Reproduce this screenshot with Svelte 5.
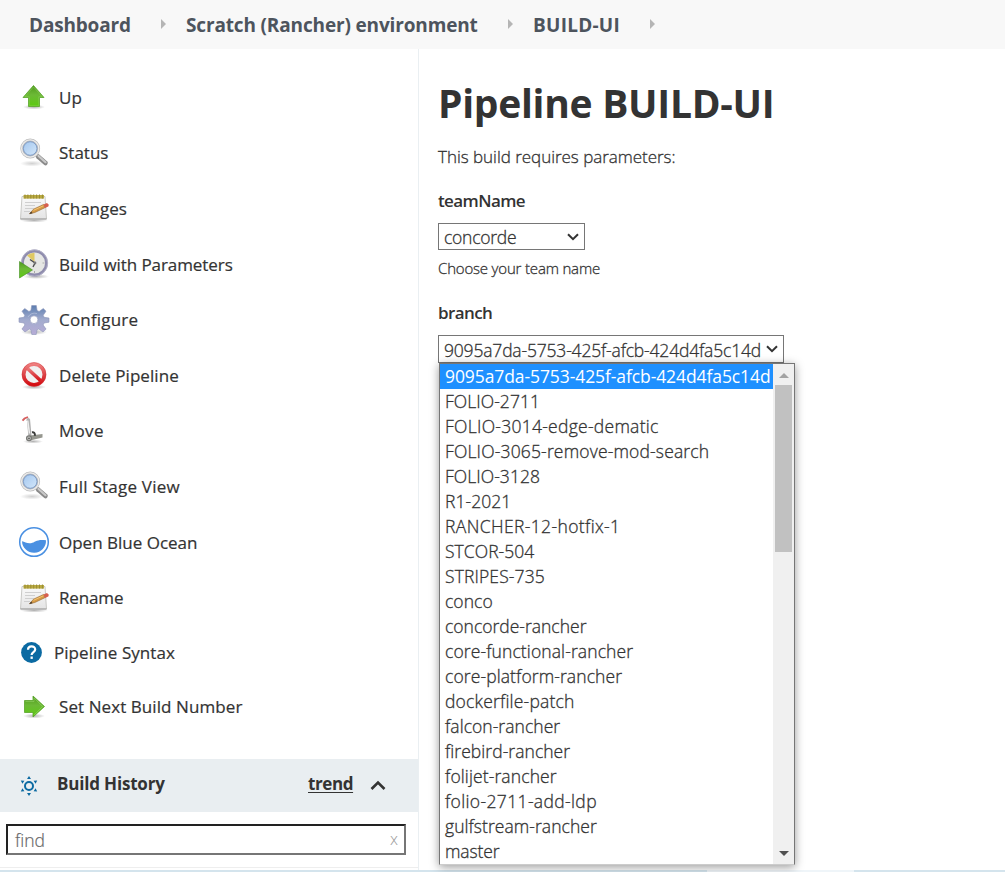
<script>
  const crumbs = [
    { text: 'Dashboard', width: 157, spacing: -0.18 },
    { text: 'Scratch (Rancher) environment', width: 347, spacing: -0.15 },
    { text: 'BUILD-UI', width: 142, spacing: 0.25 }
  ];

  const tasks = [
    { icon: 'up', text: 'Up' },
    { icon: 'search', text: 'Status' },
    { icon: 'notepad', text: 'Changes' },
    { icon: 'clock', text: 'Build with Parameters', spacing: -0.07 },
    { icon: 'gear', text: 'Configure', spacing: 0.18 },
    { icon: 'delete', text: 'Delete Pipeline', spacing: 0.07 },
    { icon: 'move', text: 'Move', spacing: 0.3 },
    { icon: 'search', text: 'Full Stage View', spacing: 0.24 },
    { icon: 'ocean', text: 'Open Blue Ocean' },
    { icon: 'notepad', text: 'Rename', spacing: -0.15 },
    { icon: 'help', text: 'Pipeline Syntax', spacing: 0.05 },
    { icon: 'next', text: 'Set Next Build Number', spacing: 0.08 }
  ];

  const branches = [
    { name: '9095a7da-5753-425f-afcb-424d4fa5c14d', spacing: -0.09 },
    { name: 'FOLIO-2711' },
    { name: 'FOLIO-3014-edge-dematic', spacing: 0.27 },
    { name: 'FOLIO-3065-remove-mod-search', spacing: 0.16 },
    { name: 'FOLIO-3128' },
    { name: 'R1-2021' },
    { name: 'RANCHER-12-hotfix-1', spacing: 0.38 },
    { name: 'STCOR-504' },
    { name: 'STRIPES-735', spacing: 0.12 },
    { name: 'conco' },
    { name: 'concorde-rancher', spacing: 0 },
    { name: 'core-functional-rancher', spacing: 0.11 },
    { name: 'core-platform-rancher', spacing: 0.1 },
    { name: 'dockerfile-patch', spacing: 0.19 },
    { name: 'falcon-rancher' },
    { name: 'firebird-rancher' },
    { name: 'folijet-rancher', spacing: 0.12 },
    { name: 'folio-2711-add-ldp', spacing: 0.36 },
    { name: 'gulfstream-rancher', spacing: 0.05 },
    { name: 'master', spacing: -0.1 }
  ];
  let selected = $state(branches[0].name);
</script>

<svg class="defs" width="0" height="0" aria-hidden="true">
  <defs>
    <linearGradient id="green" x1="0" y1="0" x2="0" y2="1">
      <stop offset="0" stop-color="#4f9a1c" /><stop offset=".45" stop-color="#6cb936" /><stop offset="1" stop-color="#5ccb10" />
    </linearGradient>
    <linearGradient id="lens" x1="0" y1="0" x2="1" y2="1">
      <stop offset="0" stop-color="#9fc4ee" /><stop offset="1" stop-color="#d8eafb" />
    </linearGradient>
    <linearGradient id="paper" x1="0" y1="0" x2="0" y2="1">
      <stop offset="0" stop-color="#fafafa" /><stop offset="1" stop-color="#e4e4e4" />
    </linearGradient>
    <linearGradient id="cog" x1="0" y1="0" x2="0" y2="1">
      <stop offset="0" stop-color="#5c7eb0" /><stop offset=".5" stop-color="#a3acce" /><stop offset="1" stop-color="#b6abd6" />
    </linearGradient>
    <linearGradient id="red" x1="0" y1="0" x2="0" y2="1">
      <stop offset="0" stop-color="#ef7f7f" /><stop offset=".5" stop-color="#dc4448" /><stop offset="1" stop-color="#d40d12" />
    </linearGradient>
    <radialGradient id="shade">
      <stop offset="0" stop-color="#000" stop-opacity=".3" /><stop offset="1" stop-color="#000" stop-opacity="0" />
    </radialGradient>
  </defs>
</svg>

{#snippet glyph(name)}
  <svg class="glyph" viewBox="0 0 32 32" width="32" height="32">
    {#if name === 'up'}
      <ellipse cx="16" cy="26" rx="11" ry="2.5" fill="url(#shade)" />
      <path d="M15.500 4.500 26 16.500h-4.500v9h-11v-9H5z" fill="url(#green)" stroke="#58a32a" stroke-width=".8" />
      <path d="M15.500 6 24 15.700h-3.300v9h-9.400v-9H7z" fill="none" stroke="#9bd66d" stroke-width=".6" opacity=".6" />
    {:else if name === 'next'}
      <ellipse cx="16" cy="26" rx="11" ry="2.500" fill="url(#shade)" />
      <path d="M6.500 10.500h8.500V6l11.500 10.500L15 27v-4.500H6.500z" fill="url(#green)" stroke="#58a32a" stroke-width=".8" />
      <path d="M7.500 11.500h8.500V8l8.500 8.500-8.500 8.500" fill="none" stroke="#a6dd7b" stroke-width=".7" opacity=".6" />
    {:else if name === 'search'}
      <ellipse cx="14" cy="26.500" rx="12" ry="3" fill="url(#shade)" opacity=".6" />
      <path d="M20 19.500 27.500 26" stroke="#8a8a8a" stroke-width="4.500" stroke-linecap="round" />
      <path d="M20.500 19 27.500 25.200" stroke="#c9c9c9" stroke-width="2.200" stroke-linecap="round" />
      <circle cx="12.200" cy="11.500" r="8.300" fill="url(#lens)" stroke="#bcbcbc" stroke-width="3.200" />
      <circle cx="12.200" cy="11.500" r="8.600" fill="none" stroke="#ececec" stroke-width="1.300" />
      <circle cx="12.200" cy="11.500" r="6.800" fill="none" stroke="#7e9ecb" stroke-width="1" />
    {:else if name === 'notepad'}
      <ellipse cx="16" cy="28.500" rx="14" ry="2" fill="url(#shade)" />
      <path d="M4 4.500h23l1.500 22.500H2.500z" fill="url(#paper)" stroke="#bdbdb9" stroke-width=".8" />
      <path d="M2.500 27h26" stroke="#a7a7a7" stroke-width="1.200" />
      <path d="M5.500 3h20.500v3.600H5.500z" fill="#bbab42" />
      <path d="M7 2.400v4.200M9.900 2.400v4.200M12.800 2.400v4.200M15.700 2.400v4.200M18.600 2.400v4.200M21.500 2.400v4.200M24.400 2.400v4.200" stroke="#8f8430" stroke-width=".8" />
      <path d="M7 10.500h16M7 13.500h10M7 16.500h9M6 19.500h6" stroke="#cfcfcf" />
      <path d="m11.500 21.800 4-4.600 10-4.700 1.800 3-10.500 5z" fill="#d49a45" stroke="#93642b" stroke-width=".6" />
      <path d="m15.500 18.300 10-4.600" stroke="#f4c473" />
      <path d="m25.500 12.500 3.500-1.500 1.800 1.800-.5 1.700-3.300 1.400z" fill="#d6604f" />
      <path d="m11.300 22 1.800-2.400 1.400 1.600z" fill="#463b2c" />
    {:else if name === 'clock'}
      <ellipse cx="18" cy="28.500" rx="13" ry="2.500" fill="url(#shade)" />
      <circle cx="16.500" cy="15" r="12" fill="#e6e7e4" stroke="#8f8cad" stroke-width="2.800" />
      <circle cx="16.500" cy="15" r="13.200" fill="none" stroke="#b9b7cb" stroke-width=".8" />
      <path d="M16.500 14 9 7.500Q12 5 16.500 4.800z" fill="#dfc862" />
      <path d="m12 11.500 5 3.500-2 4" fill="none" stroke="#4c4c4c" stroke-width="1.400" />
      <circle cx="17" cy="15" r="1.400" fill="#777" />
      <path d="M24.500 15h2M16.500 25v-2" stroke="#aaa" />
      <path d="M1.500 13.500 14.500 22 1.500 30z" fill="url(#green)" stroke="#418f20" stroke-width=".6" />
    {:else if name === 'gear'}
      <ellipse cx="16" cy="28" rx="13" ry="3" fill="url(#shade)" />
      <g fill="url(#cog)" stroke="#8d95b8" stroke-width=".6">
        <path fill-rule="evenodd" d="M13.700 1.500h4.600l.8 5 2 .9L25.300 4.500 28 7.200 25.200 11.300l.9 2 4.900.7v4.200l-5 .8-.9 2 3 4.100-3.100 2.900-4.200-3-1.800.8-.8 4.700h-4.400l-.8-4.700-1.800-.8-4.200 3-3.100-2.900 3-4.100-.9-2-5-.8V14l4.900-.7.9-2L4 7.200l2.700-2.700 4.200 2.900 2-.9zM16 11.800a3.900 3.900 0 1 0 0 7.800 3.900 3.900 0 0 0 0-7.800z" />
      </g>
      <path d="M10 13q3-5 9-3.500" fill="none" stroke="#bfc9e1" opacity=".6" />
    {:else if name === 'delete'}
      <ellipse cx="16" cy="28" rx="12" ry="2.500" fill="url(#shade)" />
      <circle cx="16" cy="15.500" r="10" fill="#f1f1f1" />
      <path d="m9 9 14 13" stroke="url(#red)" stroke-width="3.600" />
      <circle cx="16" cy="15.500" r="10.300" fill="none" stroke="url(#red)" stroke-width="3.600" />
      <circle cx="16" cy="15.500" r="12" fill="none" stroke="#cf3035" stroke-width=".5" />
    {:else if name === 'move'}
      <ellipse cx="15" cy="26.500" rx="10" ry="2" fill="url(#shade)" />
      <path d="m9 4 1.500 1 1.500 16.500" fill="none" stroke="#b0b0b0" stroke-width="3.200" />
      <path d="m9.700 5.500 1.800 13" fill="none" stroke="#ededed" stroke-width="1.500" />
      <path d="M4.500 5.700 6.500 3.500l3.500-1.500" fill="none" stroke="#d65f5f" stroke-width="1.900" />
      <path d="m12 20.500 12.500-1.500v3.500L12 25.500z" fill="#96978f" />
      <path d="M14 17.300q3-.5 3 3.500" fill="none" stroke="#3b3c3a" stroke-width="2" />
      <circle cx="11" cy="23.300" r="2.400" fill="#c9c9c5" stroke="#787976" stroke-width="1.300" />
      <circle cx="11" cy="23.300" r=".9" fill="#555" />
    {:else if name === 'ocean'}
      <circle cx="16" cy="16" r="14.300" fill="#fff" stroke="#4a90e2" stroke-width="1.500" />
      <path d="M4 15.200c3 .3 5 2.800 9 2 4.500-.9 5.500-4.200 15-2.900A12 12 0 0 1 4 15.200z" fill="#4a90e2" />
    {/if}
  </svg>
{/snippet}

<div class="page">
  <nav class="crumbs">
    {#each crumbs as c}
      <div class="crumb" style:width="{c.width}px">
        <a href="#top" style:letter-spacing="{c.spacing}px">{c.text}</a>
        <svg width="5" height="10" viewBox="0 0 5 10"><path d="M0 0 5 5 0 10z" fill="#b5b5b5" /></svg>
      </div>
    {/each}
  </nav>

  <div class="columns">
    <aside>
      <ul class="tasks">
        {#each tasks as t}
          <li class={t.icon}>
            {#if t.icon === 'help'}
              <svg class="help-icon" width="21" height="21" viewBox="0 0 21 21">
                <circle cx="10.500" cy="10.500" r="10.400" fill="#0b6aa2" />
                <path d="M7 7.800c0-4.600 7.200-4.400 7.200-.4 0 2.700-3.600 2.600-3.600 5.600" fill="none" stroke="#fff" stroke-width="2.200" />
                <path d="M9.500 14.500h2.300v2.400H9.500z" fill="#fff" />
              </svg>
            {:else}
              {@render glyph(t.icon)}
            {/if}
            <span style:letter-spacing="{t.spacing ?? 0}px">{t.text}</span>
          </li>
        {/each}
      </ul>

      <section class="history">
        <header>
          <svg class="sun" width="18" height="20" viewBox="0 0 18 20">
            <circle cx="9" cy="10" r="4" fill="none" stroke="#0b6aa2" stroke-width="2" />
            <path d="M9 0l2 3H7zM9 20l2-3H7zM.8 4.500l3.600.3-2 3zM17.200 4.500l-3.600.3 2 3zM.8 15.500l3.600-.3-2-3zM17.200 15.500l-3.600-.3 2-3z" fill="#0b6aa2" />
          </svg>
          <strong>Build History</strong>
          <a href="#trend">trend</a>
          <svg class="chev" width="16" height="11" viewBox="0 0 16 11"><path d="M1.500 9 8 2.500 14.500 9" fill="none" stroke="#333" stroke-width="2.600" /></svg>
        </header>
        <div class="find"><span>find</span><i>x</i></div>
      </section>
    </aside>

    <main>
      <h1>Pipeline BUILD-UI</h1>
      <p class="intro">This build requires parameters:</p>
      <div class="label">teamName</div>
      <div class="select team">
        <span>concorde</span>
        <svg width="12" height="8" viewBox="0 0 12 8"><path d="M1 1.200 6 6.200 11 1.200" fill="none" stroke="#333" stroke-width="2" /></svg>
      </div>
      <p class="hint">Choose your team name</p>
      <div class="label">branch</div>
      <div class="select branch">
        <span>{selected}</span>
        <svg width="12" height="8" viewBox="0 0 12 8"><path d="M1 1.200 6 6.200 11 1.200" fill="none" stroke="#333" stroke-width="2" /></svg>
        <div class="menu">
          <div class="options">
            {#each branches as b}
              <button class:active={b.name === selected} style:letter-spacing="{b.spacing ?? 0.05}px" onclick={() => (selected = b.name)}>{b.name}</button>
            {/each}
          </div>
          <div class="scroll">
            <svg width="10" height="5" viewBox="0 0 10 5"><path d="M0 5 5 0l5 5z" fill="#a3a3a3" /></svg>
            <div class="thumb"></div>
            <svg class="down" width="10" height="5" viewBox="0 0 10 5"><path d="M0 0l5 5 5-5z" fill="#505050" /></svg>
          </div>
        </div>
      </div>
    </main>
  </div>
  <footer><div></div></footer>
</div>

<style>
  :global(body) { margin: 0; overflow: hidden; background: #fff; }
  .defs { position: absolute; }
  * { box-sizing: border-box; }
  .page {
    width: 1005px; height: 872px; display: flex; flex-direction: column; overflow: hidden;
    font-family: "Open Sans", "Noto Sans", sans-serif; color: #333; white-space: nowrap;
  }
  svg { display: block; flex: none; }
  a { color: inherit; text-decoration: none; }
  .crumbs { height: 49px; flex: none; background: #f8f8f8; display: flex; padding-left: 29px; }
  .crumb { height: 49px; display: flex; align-items: center; justify-content: space-between; padding-right: 20px; }
  .crumb a { font-size: 19px; font-weight: 700; color: #4d545d; line-height: 50px; }
  .crumb svg { margin-top: -2px; }
  .columns { display: flex; height: 821px; flex: none; }
  aside { width: 419px; border-right: 1px solid #eaeff2; display: flex; flex-direction: column; }
  .tasks { list-style: none; margin: 0; padding: 20.500px 0 0 18px; height: 710px; }
  .tasks li { height: 55.600px; display: flex; align-items: center; gap: 9px; font-size: 17px; font-weight: 500; }
  .tasks li.help { height: 54.400px; gap: 12px; padding-left: 3px; }
  .tasks li.next { height: 53px; }
  .tasks span { -webkit-text-stroke: .2px #333; }
  .history { border-bottom: 1px solid #eee; height: 109px; }
  .history header { height: 53px; background: #e9eef1; display: flex; align-items: center; padding-left: 20px; font-size: 17px; font-weight: 700; letter-spacing: -.4px; line-height: 24px; }
  .history strong { margin: -4px 0 0 19px; width: 251px; font-weight: 700; letter-spacing: -.18px; }
  .history header a { margin-top: -4px; width: 62px; text-decoration: underline; text-underline-offset: 2px; text-decoration-thickness: 1px; }
  .find { margin: 12px 0 0 6px; width: 400px; height: 31px; border: 2px solid; border-color: #222 #767676 #767676 #222; display: flex; align-items: center; justify-content: space-between; padding: 1px 6px 0 7px; font-size: 17.500px; font-weight: 300; color: #666; -webkit-text-stroke: .2px #666; }
  .find i { font-style: normal; font-size: 16px; color: #999; margin-top: -3px; -webkit-text-stroke: 0; }
  main { flex: 1; padding-left: 19px; }
  h1 { margin: 26px 0 0; font-size: 39px; line-height: 56px; font-weight: 700; letter-spacing: -.28px; }
  .intro { margin: 14px 0 0; font-size: 17px; line-height: 24px; font-weight: 300; letter-spacing: -.03px; -webkit-text-stroke: .3px #333; }
  .label { margin-top: 20px; font-size: 17px; line-height: 24px; font-weight: 600; letter-spacing: -.6px; }
  .select { height: 28px; border: 1px solid #767676; display: flex; align-items: center; justify-content: space-between; padding: 0 5px; font-size: 17.500px; font-weight: 300; position: relative; }
  .select > span { margin-top: 1px; -webkit-text-stroke: .3px #333; }
  .team { width: 147px; height: 27px; margin-top: 10px; letter-spacing: -.25px; }
  .branch { width: 346px; margin-top: 10px; letter-spacing: -.18px; }
  .hint { margin: 7px 0 0; font-size: 15px; line-height: 22px; font-weight: 300; letter-spacing: -.18px; -webkit-text-stroke: .3px #333; }
  .hint + .label { margin-top: 22px; }
  .menu { position: absolute; left: 0; top: 27px; width: 356px; height: 502px; border: 1px solid #767676; border-bottom-color: #ccc; background: #fff; display: flex; box-shadow: 0 2px 9px rgba(0, 0, 0, .4); }
  .options { width: 333px; }
  .options button { display: block; width: 100%; height: 25px; border: 0; padding: 0 0 0 5px; background: none; color: #333; font: 300 17.500px/25px "Open Sans", "Noto Sans", sans-serif; text-align: left; white-space: nowrap; -webkit-text-stroke: .3px #333; }
  .options button.active { background: #1e90ff; color: #fff; font-weight: 400; -webkit-text-stroke: 0; }
  .scroll { flex: 1; background: #f0f0f0; display: flex; flex-direction: column; align-items: center; padding-top: 9px; }
  .thumb { width: 17px; height: 167px; background: #c1c1c1; margin-top: 7px; }
  .scroll .down { margin-top: 299px; }
  footer { height: 2px; background: #d4e4ed; }
  footer div { margin-left: 707px; width: 147px; height: 2px; background: #eff5f9; }
</style>
